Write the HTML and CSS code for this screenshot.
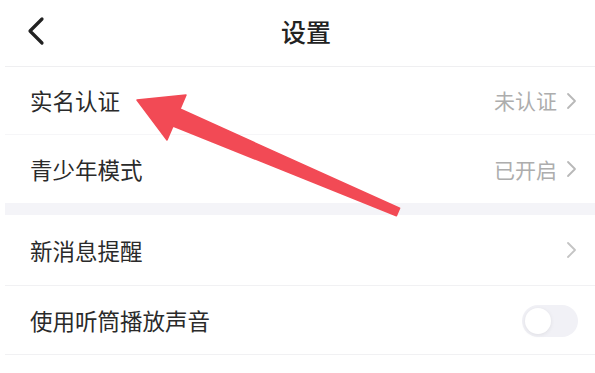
FILE: index.html
```html
<!DOCTYPE html>
<html lang="zh">
<head>
<meta charset="utf-8">
<link rel="stylesheet" href="styles.css">
</head>
<body>
<div class="page">
  <header class="header">
    <svg class="back" width="20" height="30" viewBox="0 0 20 30"><path d="M16 3 L4 15 L16 27" fill="none" stroke="#222" stroke-width="3.2" stroke-linecap="round" stroke-linejoin="round"/></svg>
    <h1 class="title">设置</h1>
    <span></span>
  </header>
  <div class="list">
    <div class="row row-first">
      <span class="label">实名认证</span>
      <span class="value">未认证<svg class="chev" width="12" height="18" viewBox="0 0 12 18"><path d="M2 2 L9 9 L2 16" fill="none" stroke="#b8b8b8" stroke-width="1.8" stroke-linecap="round" stroke-linejoin="round"/></svg></span>
    </div>
    <div class="row row-last">
      <span class="label">青少年模式</span>
      <span class="value">已开启<svg class="chev" width="12" height="18" viewBox="0 0 12 18"><path d="M2 2 L9 9 L2 16" fill="none" stroke="#b8b8b8" stroke-width="1.8" stroke-linecap="round" stroke-linejoin="round"/></svg></span>
    </div>
    <div class="band"></div>
    <div class="row row-tall">
      <span class="label">新消息提醒</span>
      <span class="value"><svg class="chev" width="12" height="18" viewBox="0 0 12 18"><path d="M2 2 L9 9 L2 16" fill="none" stroke="#c4c4c4" stroke-width="1.8" stroke-linecap="round" stroke-linejoin="round"/></svg></span>
    </div>
    <div class="row">
      <span class="label">使用听筒播放声音</span>
      <span class="toggle"><span class="knob"></span></span>
    </div>
    <div class="row">
      <span class="label">清理缓存</span>
    </div>
  </div>
  <svg class="arrow" width="595" height="373" viewBox="0 0 595 373">
    <polygon points="137,100 186,95 180,109 399.6,208.3 396.4,215.7 173,126 167,140" fill="#f24a55" stroke="#f24a55" stroke-width="1.5" stroke-linejoin="round"/>
  </svg>
</div>
</body>
</html>
```

FILE: styles.css
```css
html, body {
  margin: 0;
  padding: 0;
  background: #fff;
}
body {
  width: 595px;
  height: 373px;
  overflow: hidden;
  font-family: "Noto Sans CJK SC", "Noto Sans", sans-serif;
}
.page {
  position: relative;
  width: 595px;
  height: 373px;
  overflow: hidden;
}
.header {
  height: 66px;
  display: grid;
  grid-template-columns: 60px 1fr 60px;
  align-items: center;
  margin-left: 5px;
  border-bottom: 1px solid #efeff1;
}
.back {
  margin-left: 21px;
  margin-top: -4px;
}
.title {
  margin: 0 0 4px 12px;
  text-align: center;
  font-size: 25px;
  font-weight: 500;
  color: #222;
  line-height: 1;
}
.list {
  margin-left: 5px;
}
.row {
  height: 68px;
  display: flex;
  align-items: center;
  justify-content: space-between;
  padding: 0 17px 0 25px;
  border-bottom: 1px solid #f1f1f3;
}
.row-first {
  height: 67px;
  border-bottom-color: #f6f6f8;
}
.row-last {
  border-bottom: none;
}
.row-tall {
  height: 70px;
}
.label {
  font-size: 22.5px;
  color: #2a2a2a;
  line-height: 1;
}
.value {
  display: flex;
  align-items: center;
  gap: 9px;
  font-size: 21px;
  color: #adadad;
  line-height: 1;
}
.chev {
  display: block;
}
.band {
  height: 12px;
  background: #f4f4f8;
}
.toggle {
  position: relative;
  width: 56px;
  height: 32px;
  border-radius: 16px;
  background: #f1f1f6;
  margin-top: 2px;
}
.knob {
  position: absolute;
  left: 3px;
  top: 3px;
  width: 26px;
  height: 26px;
  border-radius: 50%;
  background: #fff;
  box-shadow: 0 1px 4px rgba(0,0,0,0.08);
}
.arrow {
  position: absolute;
  left: 0;
  top: 0;
  pointer-events: none;
}
```
